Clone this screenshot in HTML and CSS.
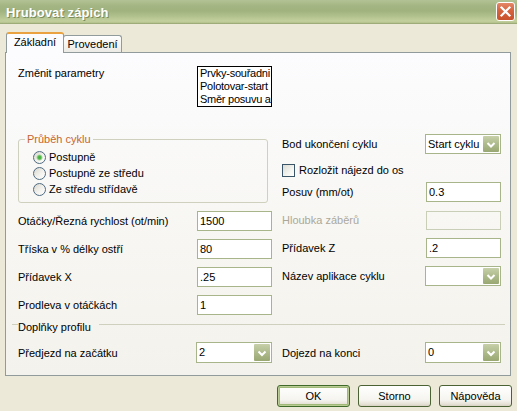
FILE: index.html
```html
<!DOCTYPE html>
<html>
<head>
<meta charset="utf-8">
<link rel="stylesheet" href="styles.css">
</head>
<body>
<div class="window">
  <div class="titlebar">
    <span class="title">Hrubovat zápich</span>
    <span class="close"><svg width="17" height="17" viewBox="0 0 17 17"><path d="M4.5 4.5 L12.5 12.5 M12.5 4.5 L4.5 12.5" stroke="#fff" stroke-width="2.2" stroke-linecap="square"/></svg></span>
  </div>
  <div class="client">
    <div class="tabs">
      <div class="tab active">Základní</div>
      <div class="tab">Provedení</div>
    </div>
    <div class="panel">
      <div class="row-top">
        <span class="lbl-top">Změnit parametry</span>
        <div class="listbox">
          <div>Prvky-souřadni</div>
          <div>Polotovar-start</div>
          <div>Směr posuvu a</div>
        </div>
      </div>
      <div class="columns">
        <div class="col-left">
          <fieldset class="group">
            <legend>Průběh cyklu</legend>
            <div class="radio-row"><span class="radio checked"></span>Postupně</div>
            <div class="radio-row"><span class="radio"></span>Postupně ze středu</div>
            <div class="radio-row"><span class="radio"></span>Ze středu střídavě</div>
          </fieldset>
          <div class="field first"><span class="lbl">Otáčky/Řezná rychlost (ot/min)</span><span class="input">1500</span></div>
          <div class="field"><span class="lbl">Tříska v % délky ostří</span><span class="input">80</span></div>
          <div class="field"><span class="lbl">Přídavek X</span><span class="input">.25</span></div>
          <div class="field"><span class="lbl">Prodleva v otáčkách</span><span class="input">1</span></div>
        </div>
        <div class="col-right">
          <div class="field r-first"><span class="lbl">Bod ukončení cyklu</span><span class="combo"><span class="val">Start cyklu</span><span class="arrow"><svg width="16" height="15" viewBox="0 0 16 15"><path d="M4.5 6 L8 9.5 L11.5 6" stroke="#fff" stroke-width="2" fill="none"/></svg></span></span></div>
          <div class="field r-chk"><span class="checkbox"></span><span class="lbl">Rozložit nájezd do os</span></div>
          <div class="field r-tight"><span class="lbl">Posuv (mm/ot)</span><span class="input">0.3</span></div>
          <div class="field"><span class="lbl disabled">Hloubka záběrů</span><span class="input off"></span></div>
          <div class="field"><span class="lbl">Přídavek Z</span><span class="input">.2</span></div>
          <div class="field"><span class="lbl">Název aplikace cyklu</span><span class="combo"><span class="val"></span><span class="arrow"><svg width="16" height="15" viewBox="0 0 16 15"><path d="M4.5 6 L8 9.5 L11.5 6" stroke="#fff" stroke-width="2" fill="none"/></svg></span></span></div>
        </div>
      </div>
      <div class="sep"><span class="sep-text">Doplňky profilu</span></div>
      <div class="columns bottom">
        <div class="field tall"><span class="lbl">Předjezd na začátku</span><span class="combo wide"><span class="val">2</span><span class="arrow"><svg width="16" height="16" viewBox="0 0 16 16"><path d="M4.5 6.5 L8 10 L11.5 6.5" stroke="#fff" stroke-width="2" fill="none"/></svg></span></span></div>
        <div class="field tall"><span class="lbl">Dojezd na konci</span><span class="combo"><span class="val">0</span><span class="arrow"><svg width="16" height="16" viewBox="0 0 16 16"><path d="M4.5 6.5 L8 10 L11.5 6.5" stroke="#fff" stroke-width="2" fill="none"/></svg></span></span></div>
      </div>
    </div>
    <div class="buttons">
      <span class="btn default">OK</span>
      <span class="btn">Storno</span>
      <span class="btn">Nápověda</span>
    </div>
  </div>
</div>
</body>
</html>
```

FILE: styles.css
```css
html, body {
  margin: 0;
  padding: 0;
  background: #ECE9D8;
}
body {
  font-family: "Liberation Sans", Arial, sans-serif;
  font-size: 11px;
  color: #000;
}
.window {
  width: 517px;
  height: 411px;
  background: #ECE9D8;
  overflow: hidden;
}
.titlebar {
  height: 24px;
  box-sizing: border-box;
  display: flex;
  align-items: center;
  justify-content: space-between;
  padding: 0 2px 0 6px;
  background: linear-gradient(to bottom, #B3C294 0%, #A3B582 25%, #A0B27E 45%, #B3C38F 70%, #C3D09D 88%, #B4C38E 95%, #8C9C68 100%);
}
.title {
  color: #fff;
  font-weight: bold;
  font-size: 13px;
  text-shadow: 1px 1px 0 #7D8D5A;
  letter-spacing: 0.1px;
}
.close {
  align-self: flex-start;
  margin-top: 2px;
  width: 19px;
  height: 19px;
  box-sizing: border-box;
  border: 1px solid #fff;
  border-radius: 3px;
  background: linear-gradient(to bottom, #E4886A 0%, #D5643E 45%, #C8522C 100%);
  display: flex;
  align-items: center;
  justify-content: center;
}
.close svg { display: block; }
.client {
  padding-top: 8px;
}
.tabs {
  display: flex;
  align-items: flex-end;
  height: 20px;
  margin-left: 6px;
}
.tab {
  box-sizing: border-box;
  height: 17px;
  width: 59px;
  margin-left: -1px;
  border: 1px solid #919B9C;
  border-bottom: none;
  border-radius: 3px 3px 0 0;
  background: linear-gradient(to bottom, #FFFFFF, #ECEBE5);
  text-align: center;
  line-height: 13px;
  padding-top: 2px;
}
.tab.active {
  position: relative;
  z-index: 2;
  margin-left: 0;
  width: 58px;
  height: 21px;
  margin-bottom: -1px;
  border-top: 2px solid #E9A23F;
  background: #FCFCFE;
  padding-top: 2px;
}
.panel {
  box-sizing: border-box;
  width: 506px;
  height: 324px;
  margin-left: 5px;
  border: 1px solid #919B9C;
  background: linear-gradient(to bottom, #FCFCFE 0%, #F7F6F2 60%, #F3F2EC 100%);
  padding: 13px 0 0 12px;
}
.row-top {
  display: flex;
  align-items: flex-start;
}
.lbl-top {
  width: 179px;
  line-height: 13px;
  margin-top: 1px;
}
.listbox {
  box-sizing: border-box;
  width: 75px;
  height: 41px;
  border: 1px solid #000;
  background: #fff;
  padding-left: 2px;
  line-height: 13px;
  overflow: hidden;
  white-space: nowrap;
  letter-spacing: -0.25px;
}
.columns {
  display: grid;
  grid-template-columns: 254px 219px;
  column-gap: 10px;
  margin-top: 26px;
  align-items: start;
}
.group {
  box-sizing: border-box;
  width: 250px;
  margin: 0;
  padding: 3px 0 5px 14px;
  border: 1px solid #D0D0BF;
  border-radius: 3px;
  min-width: 0;
}
.group legend {
  padding: 0 2px;
  margin-left: -8px;
  color: #C8652F;
  line-height: 13px;
}
.radio-row {
  display: flex;
  align-items: center;
  height: 16px;
}
.radio {
  box-sizing: border-box;
  width: 13px;
  height: 13px;
  border-radius: 50%;
  border: 1px solid #4E6A82;
  background: linear-gradient(135deg, #D8D6CB 0%, #F3F2EE 55%, #FFFFFF 100%);
  margin-right: 3px;
  flex: none;
}
.radio.checked {
  background: radial-gradient(circle at 50% 50%, #3FAE3A 0, #53B84B 1.6px, #A7DA9F 2.6px, rgba(255,255,255,0) 3.4px), linear-gradient(135deg, #D8D6CB 0%, #F3F2EE 55%, #FFFFFF 100%);
}
.field {
  display: flex;
  align-items: center;
  height: 20px;
  margin-top: 8px;
}
.field.first { margin-top: 8px; }
.field .lbl {
  flex: 1;
  white-space: nowrap;
}
.lbl.disabled { color: #ACA899; }
.input {
  box-sizing: border-box;
  width: 75px;
  height: 20px;
  border: 1px solid #A8B48A;
  background: #fff;
  padding-left: 2px;
  line-height: 18px;
  flex: none;
}
.input.off {
  background: transparent;
  border-color: #C9CEB6;
  height: 19px;
}
.r-first { margin-top: 1px; }
.r-chk { margin-top: 6px; }
.r-tight { margin-top: 2px; }
.checkbox {
  box-sizing: border-box;
  width: 13px;
  height: 13px;
  border: 1px solid #3A5468;
  background: linear-gradient(135deg, #DCDBD3 0%, #F4F4F0 60%, #FFFFFF 100%);
  margin-right: 4px;
  flex: none;
}
.combo {
  box-sizing: border-box;
  width: 76px;
  height: 20px;
  border: 1px solid #A8B48A;
  background: #fff;
  display: flex;
  align-items: stretch;
  padding: 1px;
  flex: none;
}
.combo .val {
  flex: 1;
  padding-left: 1px;
  line-height: 16px;
}
.combo .arrow {
  width: 16px;
  border-radius: 1px;
  background: linear-gradient(to bottom, #C7D0A9 0%, #AEBA8B 50%, #99A873 100%);
  display: flex;
  align-items: center;
  justify-content: center;
}
.combo .arrow svg { display: block; }
.sep {
  display: flex;
  align-items: flex-start;
  margin: 6px 5px 0 -6px;
  line-height: 13px;
  height: 13px;
}
.sep::before {
  content: "";
  width: 6px;
  border-top: 1px solid #D0D0BF;
  margin-top: 3px;
}
.sep::after {
  content: "";
  flex: 1;
  border-top: 1px solid #D0D0BF;
  margin-top: 3px;
  margin-left: 8px;
}
.columns.bottom {
  margin-top: 8px;
}
.field.tall {
  height: 21px;
  margin-top: 0;
}
.field.tall .combo { height: 21px; }
.buttons {
  display: flex;
  justify-content: flex-end;
  gap: 8px;
  padding-right: 5px;
  margin-top: 9px;
}
.btn {
  box-sizing: border-box;
  width: 73px;
  height: 22px;
  border: 1px solid #4B6334;
  border-radius: 3px;
  background: linear-gradient(to bottom, #FFFFFF 0%, #F5F4EF 70%, #E6E2D6 90%, #D6D0C2 100%);
  display: flex;
  align-items: center;
  justify-content: center;
}
.btn.default {
  border-color: #3F6A2A;
  box-shadow: inset 0 0 0 1px #B8CC93, inset 0 0 0 2px #A0B878;
}
```
